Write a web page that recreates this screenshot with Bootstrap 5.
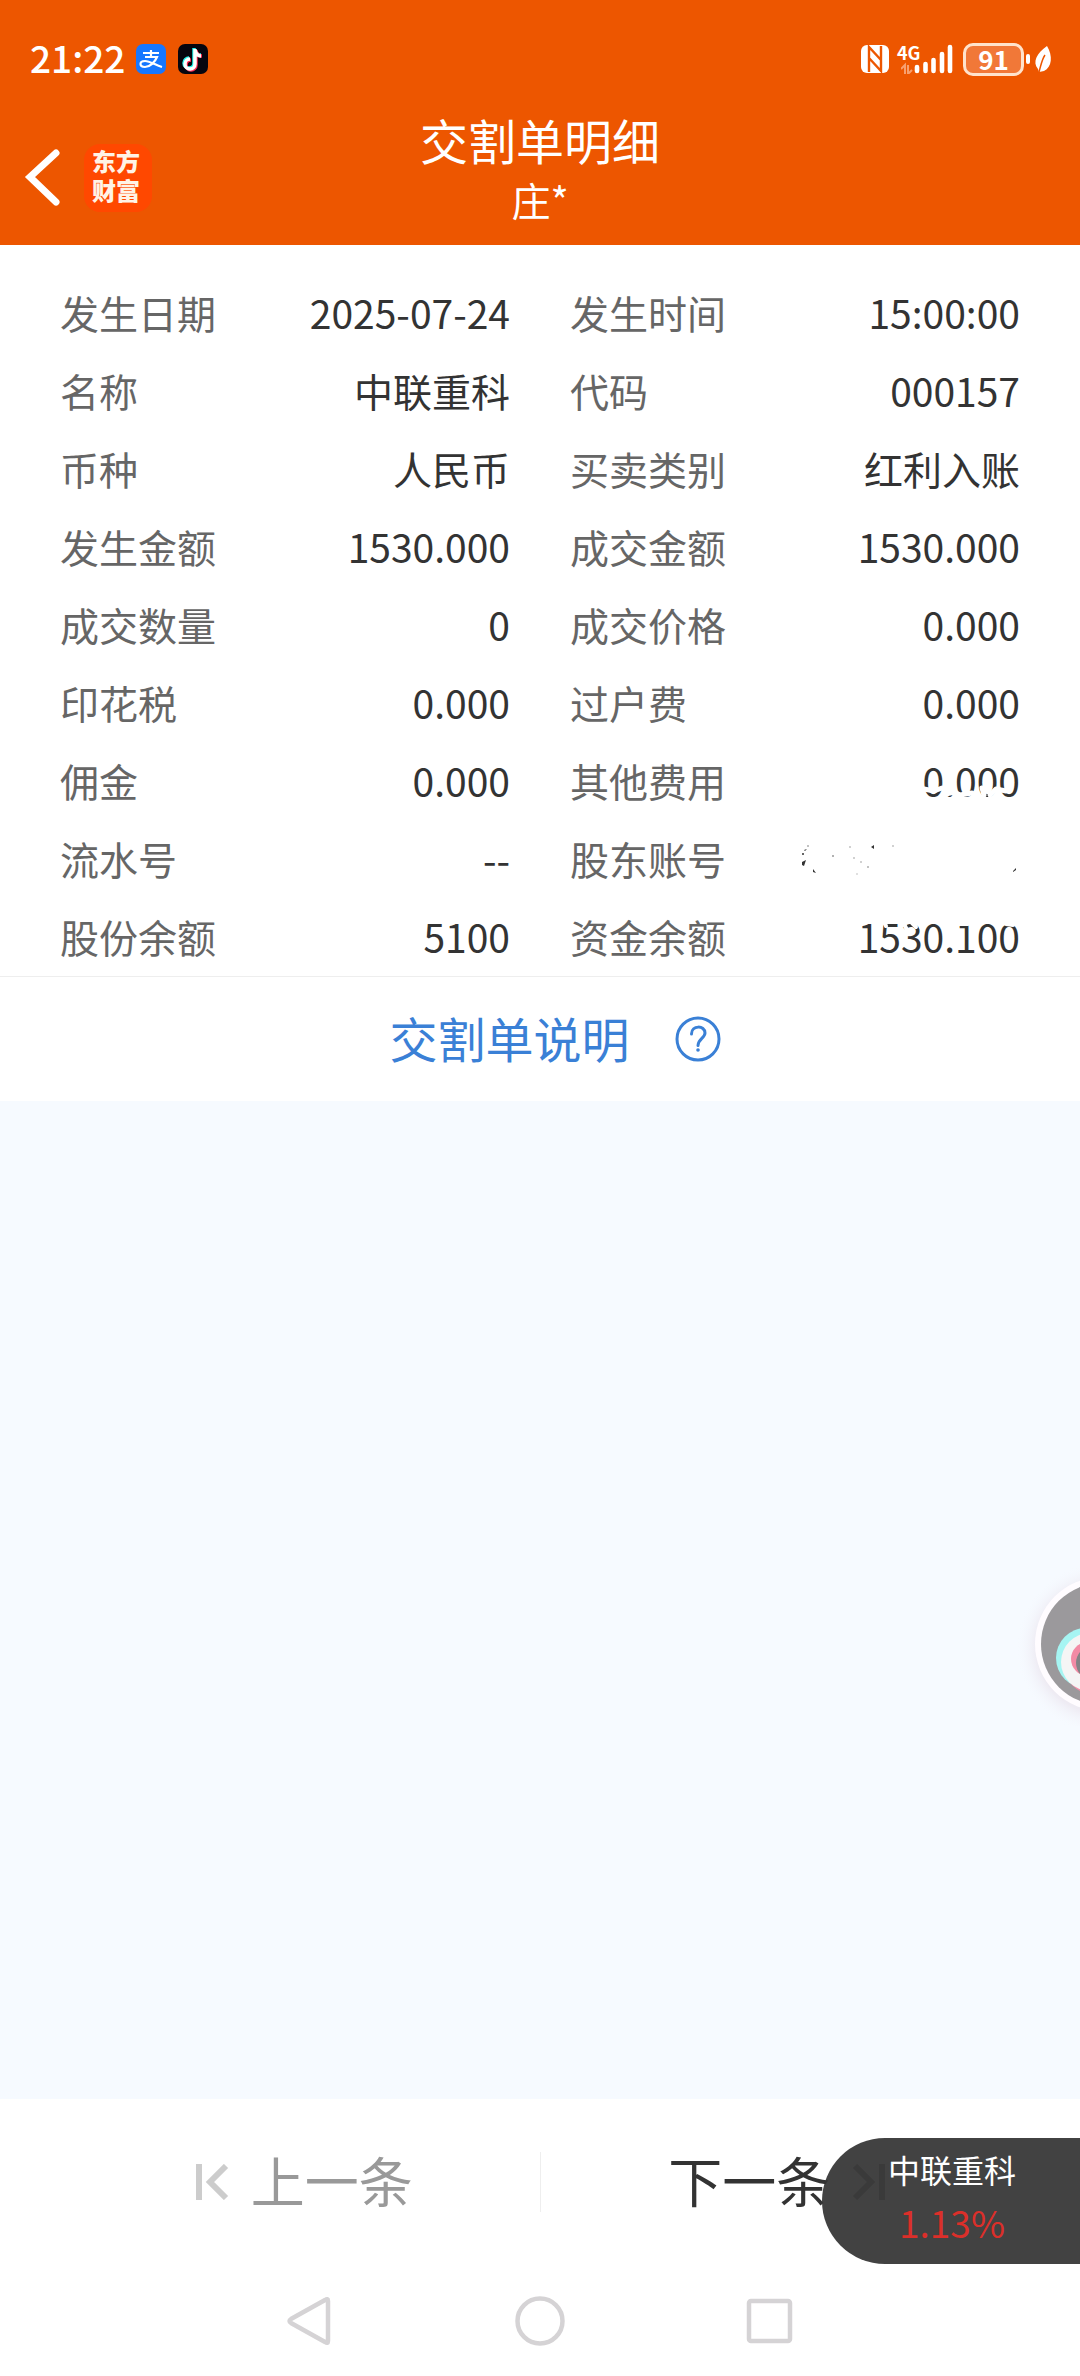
<!DOCTYPE html>
<html lang="zh-CN">
<head>
<meta charset="utf-8">
<meta name="viewport" content="width=device-width, initial-scale=1">
<title>交割单明细</title>
<link href="https://cdn.jsdelivr.net/npm/bootstrap@5.3.0/dist/css/bootstrap.min.css" rel="stylesheet">
<style>
  body { font-family: "Noto Sans CJK SC", sans-serif; font-size: 39px; line-height: 50px; color: #333; background: #f6faff; }
  .app-head { background: #ed5600; color: #fff; }
  .status-bar { height: 118px; padding: 0 24px 0 30px; }
  .status-left { gap: 11px; }
  .clock { font-size: 37px; font-weight: 500; }
  .net-type { font-size: 18px; line-height: 16px; font-weight: 700; }
  .battery { width: 61px; height: 33px; border: 3px solid #ffe3cc; border-radius: 10px; background: #f17838; font-size: 26px; line-height: 25px; font-weight: 700; }
  .title-row { padding: 0 24px 7px; height: 127px; }
  .page-title { font-size: 48px; line-height: 46px; margin: 0; font-weight: 400; }
  .account-name { line-height: 74px; }
  .brand-tile { width: 68px; height: 68px; border-radius: 16px; background: #ff4800; color: #fff3e6; font-size: 24px; line-height: 29px; font-weight: 900; padding: 2px 10px 8px 8px; }
  .details { padding: 28px 60px 1px; --bs-gutter-x: 60px; }
  .detail-item { height: 78px; }
  .detail-item dt { font-weight: 400; color: #666; }
  .help-row { border-top: 1px solid #eee; height: 125px; padding-left: 30px; }
  .help-row a { font-size: 48px; color: #3a80d6; gap: 45px; }
  .pager { height: 166px; }
  .pager .btn { font-size: 54px; line-height: 60px; gap: 22px; color: #333; border: 0; border-radius: 0; }
  .pager .btn:disabled { color: #999; opacity: 1; }
  .pager .prev-btn { padding: 0 0 0 68px; }
  .pager .next-btn { padding: 0 66px 0 0; }
  .pager .vr { height: 60px; opacity: 1; background: #eee; }
  .sys-nav { height: 111px; }
  .sys-nav .btn { width: 230px; padding: 0; border: 0; line-height: 0; }
  .ticker { right: 0; bottom: 112px; width: 258px; height: 126px; border: 0; border-radius: 63px 0 0 63px; background: rgba(52, 52, 52, .93); color: #fff; font-size: 32px; line-height: 53px; padding: 0 0 10px 2px; }
  .ticker strong { font-size: 37px; font-weight: 400; color: #db2f2a; }
  .bubble { right: 0; bottom: 650px; padding: 0; border: 0; background: none; line-height: 0; }
</style>
</head>
<body>
<div class="d-flex flex-column min-vh-100 position-relative overflow-hidden">

  <header class="app-head">
    <div class="status-bar d-flex align-items-center justify-content-between">
      <div class="status-left d-flex align-items-center">
        <span class="clock pb-1">21:22</span>
        <svg width="72" height="30" viewBox="0 0 72 30">
          <rect width="30" height="30" rx="7" fill="#1677ff"/>
          <g fill="none" stroke="#fff" stroke-width="2.2">
            <path d="M7 9H23M15 6V13M9 13H21C19 18 14 23 9 23C3 23 3 17 9 17C14 17 19 21 26 23"/>
          </g>
          <rect x="42" width="30" height="30" rx="7" fill="#06060f"/>
          <g fill="none" stroke-width="3.500">
            <path stroke="#25f4ee" d="M58 4V19A5 5 0 1 1 53 14M58 5C59 9 61 11 65 11"/>
            <path stroke="#fe2c55" d="M60 6V21A5 5 0 1 1 55 16M60 7C61 11 63 12 66 12"/>
            <path stroke="#fff" d="M59 5V20A5 5 0 1 1 54 15M59 6C60 10 62 12 65 12"/>
          </g>
        </svg>
      </div>
      <div class="d-flex align-items-center">
        <svg width="28" height="28" viewBox="0 0 28 28">
          <rect width="28" height="28" rx="6" fill="#fff"/>
          <path d="M8 27V2L20 15V7M20 1V26L8 13V21" fill="none" stroke="#ed5600" stroke-width="2.4"/>
        </svg>
        <div class="position-relative ms-2 ps-1">
          <span class="net-type position-absolute top-0 start-0">4G</span>
          <svg class="d-block" width="54" height="30" viewBox="0 0 54 30">
            <path d="M0 25L4 21V30M7 21V30L11 26" stroke="#f7a070" stroke-width="2" fill="none"/>
            <g stroke="#fff" stroke-width="4.600" stroke-linecap="round">
              <path d="M16 23V27M24.500 20V27M32.500 16V27M41 10V27M49 3V27"/>
            </g>
          </svg>
        </div>
        <div class="battery ms-2 text-center">91</div>
        <svg width="32" height="34" viewBox="0 0 32 34">
          <rect x="2" y="12" width="4" height="10" rx="2" fill="#fff"/>
          <path d="M23 4C29 14 28 25 20 29L15 30L14 27C8 20 13 11 23 4Z" fill="#fff"/>
          <path d="M21 13C18 17 17 23 15 30" stroke="#ed5600" stroke-width="1.500" fill="none"/>
        </svg>
      </div>
    </div>

    <div class="title-row d-flex align-items-center">
      <div class="d-flex align-items-center flex-fill w-25">
        <a href="#" class="d-flex" aria-label="返回">
          <svg width="36" height="60" viewBox="0 0 36 60"><path d="M32 5L6 29L32 54" fill="none" stroke="#fff" stroke-width="7" stroke-linecap="round"/></svg>
        </a>
        <div class="brand-tile ms-4">东方<br>财富</div>
      </div>
      <div class="text-center pb-1">
        <h1 class="page-title">交割单明细</h1>
        <div class="account-name">庄*</div>
      </div>
      <div class="flex-fill w-25"></div>
    </div>
  </header>

  <main class="flex-grow-1">
    <section class="bg-white">
      <dl class="details row row-cols-2 m-0">
        <div class="ps-0 detail-item d-flex align-items-center justify-content-between"><dt>发生日期</dt><dd class="m-0">2025-07-24</dd></div>
        <div class="pe-0 detail-item d-flex align-items-center justify-content-between"><dt>发生时间</dt><dd class="m-0">15:00:00</dd></div>
        <div class="ps-0 detail-item d-flex align-items-center justify-content-between"><dt>名称</dt><dd class="m-0">中联重科</dd></div>
        <div class="pe-0 detail-item d-flex align-items-center justify-content-between"><dt>代码</dt><dd class="m-0">000157</dd></div>
        <div class="ps-0 detail-item d-flex align-items-center justify-content-between"><dt>币种</dt><dd class="m-0">人民币</dd></div>
        <div class="pe-0 detail-item d-flex align-items-center justify-content-between"><dt>买卖类别</dt><dd class="m-0">红利入账</dd></div>
        <div class="ps-0 detail-item d-flex align-items-center justify-content-between"><dt>发生金额</dt><dd class="m-0">1530.000</dd></div>
        <div class="pe-0 detail-item d-flex align-items-center justify-content-between"><dt>成交金额</dt><dd class="m-0">1530.000</dd></div>
        <div class="ps-0 detail-item d-flex align-items-center justify-content-between"><dt>成交数量</dt><dd class="m-0">0</dd></div>
        <div class="pe-0 detail-item d-flex align-items-center justify-content-between"><dt>成交价格</dt><dd class="m-0">0.000</dd></div>
        <div class="ps-0 detail-item d-flex align-items-center justify-content-between"><dt>印花税</dt><dd class="m-0">0.000</dd></div>
        <div class="pe-0 detail-item d-flex align-items-center justify-content-between"><dt>过户费</dt><dd class="m-0">0.000</dd></div>
        <div class="ps-0 detail-item d-flex align-items-center justify-content-between"><dt>佣金</dt><dd class="m-0">0.000</dd></div>
        <div class="pe-0 detail-item d-flex align-items-center justify-content-between"><dt>其他费用</dt><dd class="m-0">0.000</dd></div>
        <div class="ps-0 detail-item d-flex align-items-center justify-content-between"><dt>流水号</dt><dd class="m-0">--</dd></div>
        <div class="pe-0 detail-item d-flex align-items-center justify-content-between"><dt>股东账号</dt><dd class="m-0"></dd></div>
        <div class="ps-0 detail-item d-flex align-items-center justify-content-between"><dt>股份余额</dt><dd class="m-0">5100</dd></div>
        <div class="pe-0 detail-item d-flex align-items-center justify-content-between position-relative">
          <dt>资金余额</dt><dd class="m-0">1530.100</dd>
          <!-- hidden account number: white brush strokes and leftover specks -->
          <dd class="m-0 position-absolute end-0 bottom-0">
            <svg class="d-block" width="220" height="206" viewBox="0 0 220 206">
              <path d="M124 20L134 22L142 19M146 25L154 23L160 26L172 24M182 19L184 26M190 26L196 20L206 22" stroke="#fff" stroke-width="5" stroke-linecap="round" stroke-linejoin="round" fill="none"/>
              <path d="M84 153L86 157M105 157L107 161M112 154L116 158M121 158L128 153M158 155L168 155M206 155L213 156" stroke="#fff" stroke-width="4" stroke-linecap="round" fill="none"/>
              <g fill="#333">
                <path d="M2 93L6 91L4 97L2 96ZM4 81L7 80L5 82ZM13 100L16 104L13 103ZM71 78L74 76V80ZM213 102L216 99V101L213 103Z"/>
                <circle cx="3" cy="85" r="1"/><circle cx="8" cy="77" r="1" opacity=".4"/><circle cx="33" cy="87" r="1" opacity=".5"/>
                <circle cx="50" cy="78" r="1" opacity=".3"/><circle cx="54" cy="89" r="1" opacity=".3"/><circle cx="61" cy="93" r="1" opacity=".3"/>
                <circle cx="68" cy="98" r="1" opacity=".4"/><circle cx="93" cy="77" r="1" opacity=".3"/><circle cx="57" cy="105" r="1" opacity=".2"/>
              </g>
            </svg>
          </dd>
        </div>
      </dl>
      <div class="help-row d-flex align-items-center justify-content-center">
        <a href="#" class="d-flex align-items-center text-decoration-none"><span class="pb-1">交割单说明</span>
          <svg width="46" height="46" viewBox="0 0 46 46" fill="none" stroke="#3a80d6">
            <circle cx="23" cy="23" r="21" stroke-width="3"/>
            <path d="M16.500 18C16.500 9 30 9 30 17C30 22 23 23 23 29.500" stroke-width="3" stroke-linecap="round"/>
            <circle cx="23" cy="34" r="1.800" fill="#3a80d6" stroke="none"/>
          </svg>
        </a>
      </div>
    </section>
  </main>

  <footer class="bg-white">
    <div class="pager d-flex align-items-center">
      <button type="button" class="btn prev-btn flex-fill w-50 d-flex align-items-center justify-content-center" disabled>
        <svg width="34" height="36" viewBox="0 0 34 36" fill="none" stroke="#ccc" stroke-width="6"><path d="M4 0V36M31 2L15 18L31 34"/></svg>
        <span class="pb-1">上一条</span>
      </button>
      <div class="vr align-self-center"></div>
      <button type="button" class="btn next-btn flex-fill w-50 d-flex align-items-center justify-content-center">
        <span class="pb-1">下一条</span>
        <svg width="34" height="36" viewBox="0 0 34 36" fill="none" stroke="#888" stroke-width="6"><path d="M30 0V36M3 2L19 18L3 34"/></svg>
      </button>
    </div>
    <nav class="sys-nav d-flex align-items-center justify-content-center" aria-label="系统导航">
      <button type="button" class="btn" aria-label="后退"><svg width="52" height="52" viewBox="0 0 52 52"><path d="M44 6V46Q44 49 41 47L7 28Q4 26 7 24L41 5Q44 3 44 6Z" fill="none" stroke="#d5d3d5" stroke-width="4.500"/></svg></button>
      <button type="button" class="btn" aria-label="主页"><svg width="52" height="52" viewBox="0 0 52 52"><circle cx="26" cy="26" r="22.500" fill="none" stroke="#d5d3d5" stroke-width="4.500"/></svg></button>
      <button type="button" class="btn" aria-label="最近任务"><svg width="52" height="52" viewBox="0 0 52 52"><rect x="5" y="6" width="41" height="40" rx="2" fill="none" stroke="#d5d3d5" stroke-width="4.500"/></svg></button>
    </nav>
  </footer>

  <button type="button" class="bubble position-absolute" aria-label="抖音">
    <svg width="80" height="160" viewBox="0 0 80 160">
      <defs>
        <radialGradient id="halo"><stop offset=".76" stop-color="#eeebf3"/><stop offset="1" stop-color="#f6faff" stop-opacity="0"/></radialGradient>
        <clipPath id="disc"><circle cx="102" cy="78" r="61"/></clipPath>
      </defs>
      <circle cx="102" cy="82" r="86" fill="url(#halo)"/>
      <circle cx="102" cy="78" r="67" fill="#fffcff"/>
      <circle cx="102" cy="78" r="61" fill="#9b999c"/>
      <g clip-path="url(#disc)">
        <circle cx="86" cy="92" r="30" fill="#a6f5f3"/>
        <circle cx="93" cy="99" r="29" fill="#f38ba5"/>
        <circle cx="90" cy="96" r="29" fill="#f5f5f5"/>
        <circle cx="88" cy="93" r="17" fill="#f38ba5"/>
        <circle cx="93" cy="97" r="17" fill="#858386"/>
      </g>
    </svg>
  </button>

  <button type="button" class="ticker position-absolute d-flex flex-column align-items-center justify-content-center">
    <span>中联重科</span>
    <strong>1.13%</strong>
  </button>
</div>
<script src="https://cdn.jsdelivr.net/npm/bootstrap@5.3.0/dist/js/bootstrap.bundle.min.js"></script>
</body>
</html>
